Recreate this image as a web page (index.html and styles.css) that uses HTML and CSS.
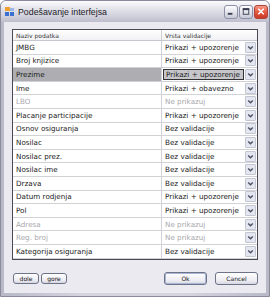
FILE: index.html
```html
<!DOCTYPE html>
<html lang="sr">
  <head>
    <meta charset="UTF-8" />
    <title>Podešavanje interfejsa</title>
    <link rel="stylesheet" href="styles.css">
  </head>
  <body>
    <div class="window">
      <div class="titlebar">
        <svg class="app-icon" width="9" height="9" viewBox="0 0 9 9">
          <rect x="0" y="0" width="5" height="4" fill="#f0a030" />
          <rect x="0" y="5" width="4" height="4" fill="#3a70d0" />
          <rect x="5" y="5" width="4" height="4" fill="#3a70d0" />
          <rect x="5" y="1" width="4" height="3" fill="#9ab8e8" />
        </svg>
        <span class="title">Podešavanje interfejsa</span>
        <div class="caption-buttons">
          <div class="cap-btn">
            <svg width="13" height="13" viewBox="0 0 13 13"><rect x="3" y="8" width="5" height="2" fill="#3b3f52" /></svg>
          </div>
          <div class="cap-btn">
            <svg width="13" height="13" viewBox="0 0 13 13"><rect x="3.5" y="3.5" width="6" height="6" fill="none" stroke="#3b3f52" /><rect x="3" y="3" width="7" height="2" fill="#3b3f52" /></svg>
          </div>
          <div class="cap-btn close">
            <svg width="13" height="13" viewBox="0 0 13 13"><path d="M3.5 3.5 L9.5 9.5 M9.5 3.5 L3.5 9.5" stroke="#fff" stroke-width="1.6" /></svg>
          </div>
        </div>
      </div>

      <div class="client">
        <div class="grid">
          <div class="row head">
            <div class="cell">Naziv podatka</div>
            <div class="cell">Vrsta validacije</div>
          </div>

          <div class="row"><div class="cell">JMBG</div><div class="cell combo"><span>Prikazi + upozorenje</span><i class="arrow"></i></div></div>
          <div class="row"><div class="cell">Broj knjizice</div><div class="cell combo"><span>Prikazi + upozorenje</span><i class="arrow"></i></div></div>
          <div class="row selected"><div class="cell">Prezime</div><div class="cell combo"><span>Prikazi + upozorenje</span><i class="arrow"></i></div></div>
          <div class="row"><div class="cell">Ime</div><div class="cell combo"><span>Prikazi + obavezno</span><i class="arrow"></i></div></div>
          <div class="row off"><div class="cell">LBO</div><div class="cell combo"><span>Ne prikazuj</span><i class="arrow"></i></div></div>
          <div class="row"><div class="cell">Placanje participacije</div><div class="cell combo"><span>Prikazi + upozorenje</span><i class="arrow"></i></div></div>
          <div class="row"><div class="cell">Osnov osiguranja</div><div class="cell combo"><span>Bez validacije</span><i class="arrow"></i></div></div>
          <div class="row"><div class="cell">Nosilac</div><div class="cell combo"><span>Bez validacije</span><i class="arrow"></i></div></div>
          <div class="row"><div class="cell">Nosilac prez.</div><div class="cell combo"><span>Bez validacije</span><i class="arrow"></i></div></div>
          <div class="row"><div class="cell">Nosilac ime</div><div class="cell combo"><span>Bez validacije</span><i class="arrow"></i></div></div>
          <div class="row"><div class="cell">Drzava</div><div class="cell combo"><span>Bez validacije</span><i class="arrow"></i></div></div>
          <div class="row"><div class="cell">Datum rodjenja</div><div class="cell combo"><span>Prikazi + upozorenje</span><i class="arrow"></i></div></div>
          <div class="row"><div class="cell">Pol</div><div class="cell combo"><span>Prikazi + upozorenje</span><i class="arrow"></i></div></div>
          <div class="row off"><div class="cell">Adresa</div><div class="cell combo"><span>Ne prikazuj</span><i class="arrow"></i></div></div>
          <div class="row off"><div class="cell">Reg. broj</div><div class="cell combo"><span>Ne prikazuj</span><i class="arrow"></i></div></div>
          <div class="row"><div class="cell">Kategorija osiguranja</div><div class="cell combo"><span>Bez validacije</span><i class="arrow"></i></div></div>
        </div>

        <div class="footer">
          <div class="left-buttons">
            <button class="btn small">dole</button>
            <button class="btn small">gore</button>
          </div>
          <div class="right-buttons">
            <button class="btn default">Ok</button>
            <button class="btn">Cancel</button>
          </div>
        </div>
      </div>
    </div>
  </body>
</html>
```

FILE: styles.css
```css
/* Reset */
* {
  box-sizing: border-box;
  margin: 0;
  padding: 0;
}

body {
  width: 270px;
  height: 297px;
  font-family: "DejaVu Sans", Verdana, sans-serif;
  color: #222;
  background: #fff;
}

/* Window frame */
.window {
  height: 297px;
  display: flex;
  flex-direction: column;
  background: linear-gradient(90deg, #b9b8c6, #d4d3de 30%, #d4d3de 70%, #b9b8c6);
  border: 1px solid #8a8a9c;
  border-radius: 6px 6px 0 0;
}

.titlebar {
  height: 21px;
  display: flex;
  align-items: center;
  padding: 0 1px 0 4px;
  border-radius: 5px 5px 0 0;
  background: linear-gradient(#fcfcfd, #e8e8ef 30%, #cfcfdb 75%, #bdbdcc);
}

.app-icon {
  margin-right: 4px;
}

.title {
  font-family: "Liberation Sans", Arial, sans-serif;
  font-size: 8.8px;
  color: #1c1c28;
  flex: 1;
}

.caption-buttons {
  display: flex;
  gap: 1px;
}

.cap-btn {
  width: 14px;
  height: 14px;
  border: 1px solid #8d90a6;
  border-radius: 3px;
  background: linear-gradient(#ffffff, #e4e4ec 50%, #c8c9d6);
  display: flex;
  align-items: center;
  justify-content: center;
}

.cap-btn.close {
  border-color: #b04438;
  background: linear-gradient(#f59a88, #e55a40 50%, #c93a28);
}

/* Client area */
.client {
  flex: 1;
  margin: 0 3px 3px;
  padding: 7px 8px 0;
  background: #ebeaf0;
}

.grid {
  height: 231px;
  background: #fff;
  border: 1px solid #4a4a52;
  overflow: hidden;
}

.row {
  display: grid;
  grid-template-columns: 149px 1fr;
  height: 13.6px;
  border-bottom: 1px solid #d2d2d6;
  font-size: 7.2px;
}

.row.head {
  height: 11px;
  font-size: 6px;
  color: #333;
  background: linear-gradient(#ffffff, #f1f1f4);
  border-bottom: 1px solid #c8c8d0;
}

.cell {
  display: flex;
  align-items: center;
  padding-left: 3px;
  border-right: 1px solid #d2d2d6;
  white-space: nowrap;
  overflow: hidden;
}

.cell:last-child {
  border-right: none;
}

.combo {
  padding: 0;
  justify-content: space-between;
}

.combo span {
  padding-left: 3px;
}

.arrow {
  flex: none;
  width: 11px;
  height: 11px;
  margin-right: 1px;
  border: 1px solid #c2c6d2;
  border-radius: 1px;
  background: #e4e7ef url("data:image/svg+xml;utf8,<svg xmlns='http://www.w3.org/2000/svg' width='9' height='9'><path d='M2.2 3.4 L4.5 5.8 L6.8 3.4' fill='none' stroke='%234d5166' stroke-width='1.4'/></svg>") center no-repeat;
}

.row.selected .cell:first-child {
  background: #aeaeb2;
}

.row.selected .combo span {
  background: #c6c6ca;
  border: 1px solid #333;
  flex: 1;
  height: 11px;
  line-height: 9px;
  margin: 0 1px;
  padding-left: 2px;
}

.row.off {
  color: #a8a8ac;
}

/* Bottom buttons */
.footer {
  display: flex;
  justify-content: space-between;
  align-items: center;
  margin-top: 12px;
}

.left-buttons,
.right-buttons {
  display: flex;
}

.left-buttons {
  gap: 2px;
  padding-left: 1px;
}

.right-buttons {
  gap: 8px;
}

.btn {
  width: 43px;
  height: 13px;
  font-family: "DejaVu Sans", Verdana, sans-serif;
  font-size: 6px;
  color: #111;
  border: 1px solid #6e7388;
  border-radius: 3px;
  background: linear-gradient(#ffffff, #ececf2 70%, #d6d6e0);
}

.btn.small {
  width: 26px;
  height: 11px;
}

.btn.default {
  box-shadow: inset 0 0 0 1px #a8b6d8;
}
```
